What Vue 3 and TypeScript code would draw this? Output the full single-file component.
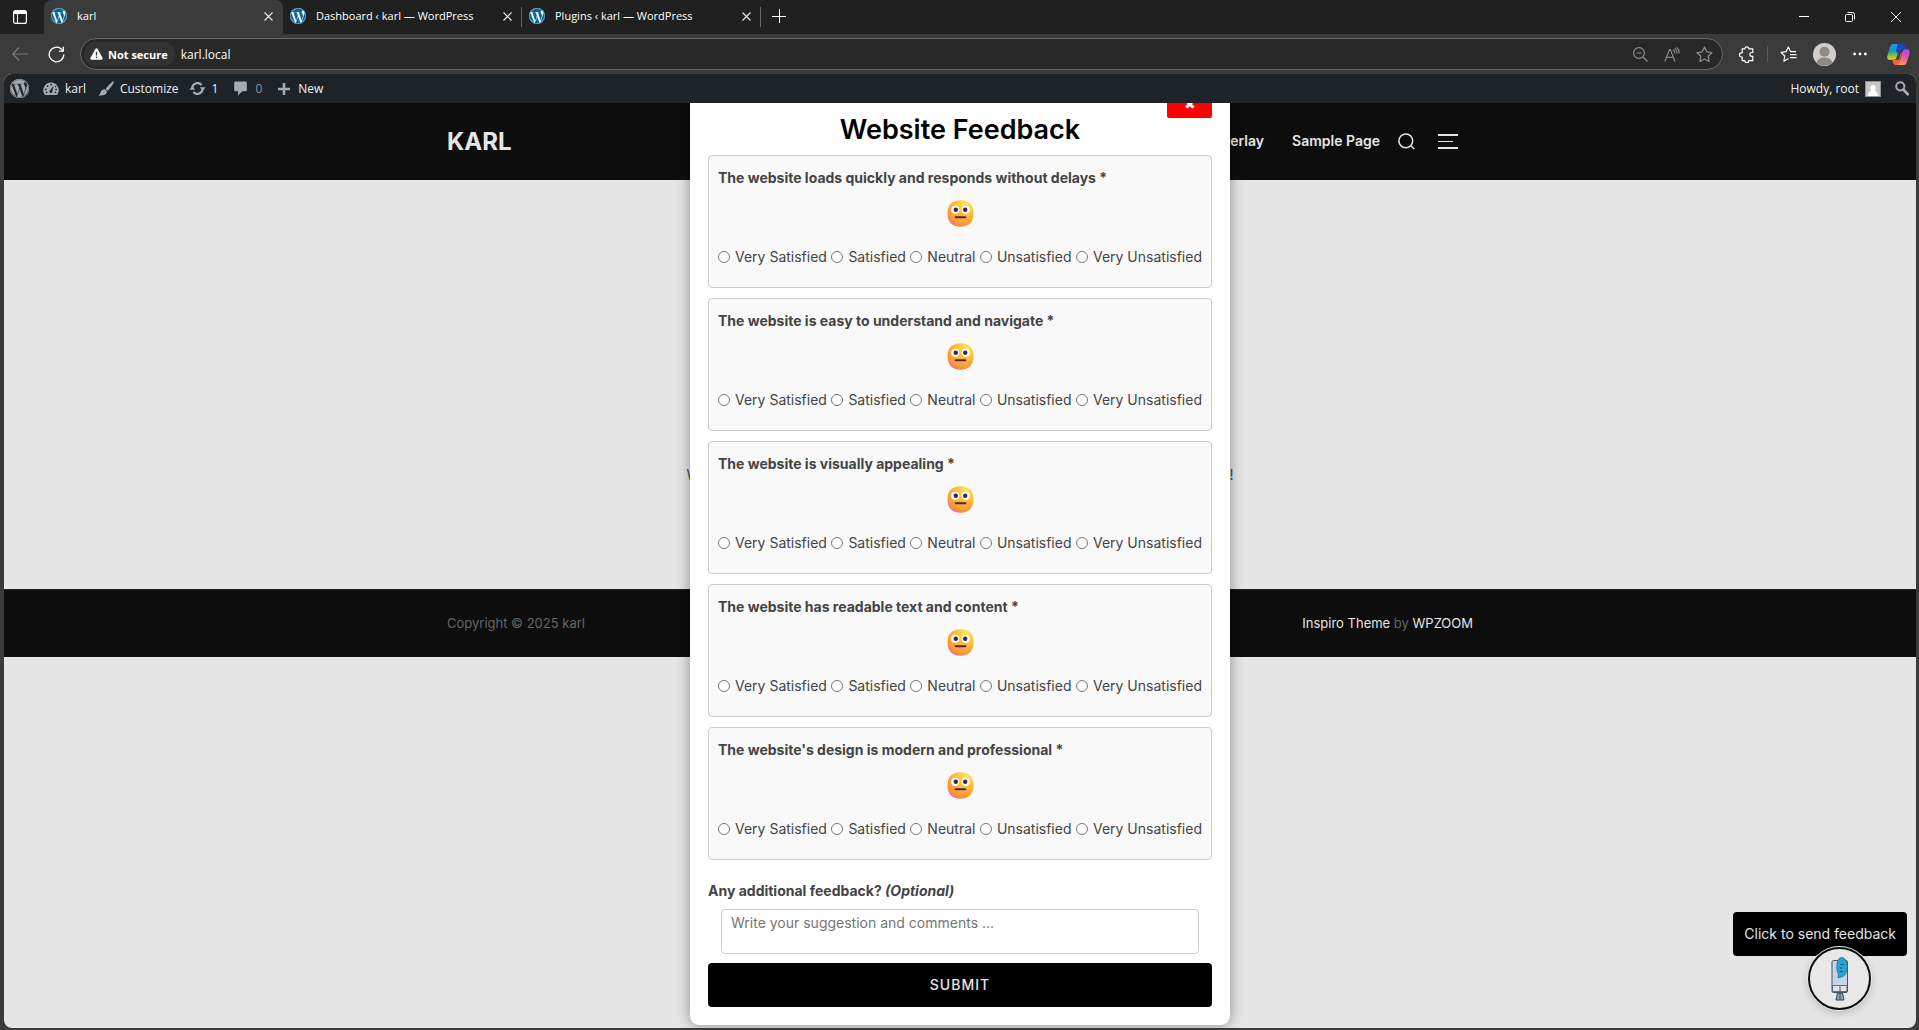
<script setup lang="ts">
import { reactive, ref } from 'vue'

interface Tab {
  title: string
  active: boolean
}

const WP_PATH =
  'M21.469 6.825c.84 1.537 1.318 3.3 1.318 5.175 0 3.979-2.156 7.456-5.363 9.325l3.295-9.527c.615-1.54.82-2.771.82-3.864 0-.405-.026-.78-.07-1.11m-7.981.105c.647-.03 1.232-.105 1.232-.105.582-.075.514-.93-.067-.899 0 0-1.755.135-2.88.135-1.064 0-2.85-.15-2.85-.15-.585-.03-.661.855-.075.885 0 0 .54.061 1.125.09l1.68 4.605-2.37 7.08L5.354 6.9c.649-.03 1.234-.1 1.234-.1.585-.075.516-.93-.065-.896 0 0-1.746.138-2.874.138-.2 0-.438-.008-.69-.015C4.911 3.15 8.235 1.215 12 1.215c2.809 0 5.365 1.072 7.286 2.833-.046-.003-.091-.009-.141-.009-1.06 0-1.812.923-1.812 1.914 0 .89.513 1.643 1.06 2.531.411.72.89 1.643.89 2.977 0 .915-.354 1.994-.821 3.479l-1.075 3.585-3.9-11.61.001.014zM12 22.784c-1.059 0-2.081-.153-3.048-.437l3.237-9.406 3.315 9.087c.024.053.05.101.078.149-1.12.393-2.325.609-3.582.609M1.211 12c0-1.564.336-3.05.935-4.39L7.29 21.709C3.694 19.96 1.212 16.271 1.211 12M12 0C5.385 0 0 5.385 0 12s5.385 12 12 12 12-5.385 12-12S18.615 0 12 0zM12 .55C18.3.55 23.45 5.7 23.45 12S18.3 23.45 12 23.45.55 18.3.55 12 5.7.55 12 .55z'

const tabs: Tab[] = [
  { title: 'karl', active: true },
  { title: 'Dashboard ‹ karl — WordPress', active: false },
  { title: 'Plugins ‹ karl — WordPress', active: false },
]

const questions: string[] = [
  'The website loads quickly and responds without delays *',
  'The website is easy to understand and navigate *',
  'The website is visually appealing *',
  'The website has readable text and content *',
  "The website's design is modern and professional *",
]

const ratings: string[] = ['Very Satisfied', 'Satisfied', 'Neutral', 'Unsatisfied', 'Very Unsatisfied']

const answers = reactive<Record<number, string>>({})
const comment = ref<string>('')
const address = ref<string>('karl.local')
</script>

<template>
  <div class="browser">
    <div class="tabstrip">
      <button class="chrome-btn workspace" aria-label="Tab actions">
        <svg width="14" height="14" viewBox="0 0 14 14" fill="none" stroke="#fff">
          <rect x=".6" y=".6" width="12.8" height="12.8" rx="2" stroke-width="1.2" />
          <path d="M1 2.5h12" stroke-width="3" />
          <path d="M4.5 4v9" stroke-width="1.1" />
        </svg>
      </button>
      <div v-for="tab in tabs" :key="tab.title" class="tab" :class="{ active: tab.active }">
        <svg class="favicon" width="16" height="16" viewBox="0 0 24 24">
          <circle cx="12" cy="12" r="12" fill="#fff" />
          <path :d="WP_PATH" fill="#006799" fill-rule="evenodd" stroke="#006799" stroke-width=".3" />
        </svg>
        <span class="tab-title">{{ tab.title }}</span>
        <button class="chrome-btn tab-close" aria-label="Close tab">
          <svg width="9" height="9" viewBox="0 0 9 9" stroke="#e6e6e6" stroke-width="1.2"><path d="M.5.5l8 8M8.5.5l-8 8" /></svg>
        </button>
      </div>
      <button class="chrome-btn new-tab" aria-label="New tab">
        <svg width="14" height="14" viewBox="0 0 14 14" stroke="#fff"><path d="M0 7.5h14M7.5 0v14" /></svg>
      </button>
      <div class="window-controls">
        <button class="chrome-btn" aria-label="Minimize">
          <svg width="10" height="10" viewBox="0 0 10 10" stroke="#fff"><path d="M0 4.5h10" /></svg>
        </button>
        <button class="chrome-btn" aria-label="Restore">
          <svg width="10" height="10" viewBox="0 0 10 10" fill="none" stroke="#fff">
            <rect x=".5" y="2.5" width="7" height="7" rx="1" />
            <path d="M2.5.5h5a2 2 0 0 1 2 2v5" />
          </svg>
        </button>
        <button class="chrome-btn" aria-label="Close">
          <svg width="10" height="10" viewBox="0 0 10 10" stroke="#fff"><path d="M0 0l10 10M10 0L0 10" /></svg>
        </button>
      </div>
    </div>

    <div class="toolbar">
      <button class="chrome-btn nav-btn" aria-label="Back">
        <svg width="16" height="14" viewBox="0 0 16 14" fill="none" stroke="#7a7a7a" stroke-width="1.2"><path d="M16 7H1M7 .5L.8 7 7 13.5" /></svg>
      </button>
      <button class="chrome-btn nav-btn" aria-label="Refresh">
        <svg width="17" height="17" viewBox="0 0 17 17" fill="none" stroke="#fff" stroke-width="1.3">
          <path d="M15.8 8.5a7.3 7.3 0 1 1-2.2-5.2l1.6 1.7" />
          <path d="M15.3.8v4.3H11" />
        </svg>
      </button>
      <div class="address">
        <button class="chrome-btn security">
          <svg width="13" height="12" viewBox="0 0 13 12">
            <path d="M6.5.3c.5 0 .9.3 1.1.7l5 9c.4.8-.1 1.7-1 1.7H1.4c-.9 0-1.4-.9-1-1.7l5-9c.2-.4.6-.7 1.1-.7z" fill="#fff" />
            <path d="M6.5 3.8v3.7M6.5 8.6v1.3" stroke="#333" stroke-width="1.3" />
          </svg>
          Not secure
        </button>
        <input v-model="address" class="url" type="text" aria-label="Address" />
        <button class="chrome-btn addr-btn" aria-label="Zoom">
          <svg width="15" height="15" viewBox="0 0 15 15" fill="none" stroke="#909090" stroke-width="1.1">
            <circle cx="6" cy="6" r="5.4" /><path d="M10 10l4.5 4.5M3.5 6h5" />
          </svg>
        </button>
        <button class="chrome-btn addr-btn" aria-label="Read aloud">
          <svg width="16" height="15" viewBox="0 0 16 15" fill="none" stroke="#909090" stroke-width="1.1">
            <path d="M.8 14.5L5.5 2.5h.8L11 14.5M2.600 10.200h6.600M8.800 2.800a4.200 4.200 0 0 1 2.200 4M10.800 1.400a6.500 6.500 0 0 1 2.400 5.200M12.600.3a7.500 7.500 0 0 1 2.600 5.900" />
          </svg>
        </button>
        <button class="chrome-btn addr-btn" aria-label="Favorite">
          <svg width="17" height="17" viewBox="0 0 17 17" fill="none" stroke="#909090" stroke-width="1.2" stroke-linejoin="round">
            <path d="M8.5 1l2.3 4.800 5.200.7-3.800 3.700.9 5.300-4.600-2.500-4.600 2.500.9-5.300L1 6.500l5.200-.7z" />
          </svg>
        </button>
      </div>
      <div class="toolbar-right">
        <button class="chrome-btn tool" aria-label="Extensions">
          <svg width="16" height="17" viewBox="0 0 16 17" fill="none" stroke="#fff" stroke-width="1.2" stroke-linejoin="round">
            <path d="M3.2 2.8h2.600a2 2 0 0 1 4 0h4v3.700h-1a1.900 1.900 0 0 0 0 3.800h1v4.400h-4a2 2 0 0 1-4 0H3.200v-3.700H2.500a1.900 1.900 0 0 1 0-4.200h.7z" />
          </svg>
        </button>
        <span class="tool-sep"></span>
        <button class="chrome-btn tool favs" aria-label="Favorites">
          <svg width="17" height="16" viewBox="0 0 17 16" fill="none" stroke="#fff" stroke-width="1.2" stroke-linejoin="round">
            <path d="M8.5 12.6l-4.600 2.600.9-5.200L1 6.400l5.200-.8L8.300 1l2.300 4.600H16M10 8.600h6.500M10 11.600h6.500" />
          </svg>
        </button>
        <button class="chrome-btn tool profile" aria-label="Profile">
          <svg width="23" height="23" viewBox="0 0 23 23">
            <circle cx="11.5" cy="11.5" r="11.5" fill="#d2cfcb" />
            <circle cx="11.5" cy="8.8" r="5" fill="#8d8984" />
            <path d="M3.5 19.5c1-3.4 4-5 8-5s7 1.6 8 5c-2 2.2-4.8 3.3-8 3.3s-6-1.1-8-3.3z" fill="#8d8984" />
          </svg>
        </button>
        <button class="chrome-btn tool menu" aria-label="Settings and more">
          <svg width="14" height="4" viewBox="0 0 14 4" fill="#fff"><circle cx="1.6" cy="2" r="1.4" /><circle cx="7" cy="2" r="1.4" /><circle cx="12.4" cy="2" r="1.4" /></svg>
        </button>
        <button class="chrome-btn tool copilot" aria-label="Copilot">
          <svg width="23" height="21" viewBox="0 0 23 21">
            <defs>
              <linearGradient id="cpA" x1="0" y1="0" x2="0" y2="1">
                <stop offset="0" stop-color="#1c9cf0" /><stop offset=".4" stop-color="#1f93c8" /><stop offset=".7" stop-color="#6fbf4a" /><stop offset="1" stop-color="#f7d000" />
              </linearGradient>
              <linearGradient id="cpB" x1=".7" y1="0" x2=".4" y2="1">
                <stop offset="0" stop-color="#a14df0" /><stop offset=".5" stop-color="#e9529c" /><stop offset="1" stop-color="#ff9a5a" />
              </linearGradient>
            </defs>
            <path d="M6 0h9L9.5 13.6c-.5 1.400-1.300 2.200-2.800 2.200H3c-2.300 0-3.300-1.700-2.600-4L3 3.500C3.700 1.200 4.300 0 6 0z" fill="url(#cpA)" />
            <path d="M10.5 0H15c1.500 0 2.300 1 2.700 2.300l.8 2.900h-3c-1.500 0-2.300.8-2.700 2.100l-1.300 4L9 7z" fill="#1b48c9" />
            <path d="M17 21H9.500C7.500 21 6.500 20.300 6 18.700L5.200 15.800H8c1.500 0 2.300-.8 2.800-2.200l.7-2.300 1.300-4 2 2L12.500 17z" fill="#f0643c" />
            <path d="M17 21H9.500c1.500 0 2.400-1 3-3l3-10c.4-1.500 1-2.800 2.500-2.800h2c2.300 0 3.300 1.700 2.600 4L20 17.500c-.7 2.300-1.300 3.500-3 3.500z" fill="url(#cpB)" />
            <path d="M12.6 7.5L10.500 14c-.4 1.200-1 1.800-2 1.800h3.200l2.500-8.300z" fill="#3b3b3b" />
          </svg>
        </button>
      </div>
    </div>

    <div class="viewport">
      <nav class="adminbar">
        <a href="#" aria-label="About WordPress" class="ab-logo">
          <svg width="19" height="19" viewBox="0 0 24 24"><path :d="WP_PATH" fill="#a7aaad" fill-rule="evenodd" stroke="#a7aaad" stroke-width=".4" /></svg>
        </a>
        <a href="#" class="ab-site">
          <svg width="16" height="14" viewBox="0 0 16 14">
            <path d="M8 .5a7.7 7.7 0 0 0-6.6 11.7c.3.5.8.8 1.4.8h10.400c.6 0 1.100-.3 1.400-.8A7.700 7.700 0 0 0 8 .5z" fill="#a7aaad" />
            <path d="M10.8 3.5L9.300 9.200a1.500 1.500 0 1 1-2.300-.8z" fill="#1d2327" />
            <g fill="#1d2327"><circle cx="8" cy="2.6" r=".9" /><circle cx="4.6" cy="4.1" r=".9" /><circle cx="2.9" cy="7.3" r=".9" /><circle cx="13.1" cy="7.3" r=".9" /><circle cx="12.6" cy="4.7" r=".7" /><circle cx="3.6" cy="10.3" r=".9" /><circle cx="12.4" cy="10.3" r=".9" /></g>
          </svg>
          karl
        </a>
        <a href="#" class="ab-customize">
          <svg width="16" height="15" viewBox="0 0 16 15" fill="#a7aaad">
            <path d="M15.6.3c.5.5.2 1.300-.3 2.200-1.300 2.300-3.300 5-5 6.700-.7.600-1.400.5-2-.1-.7-.6-.8-1.300-.2-2C9.700 5.200 12 2.500 14 .9c.6-.5 1.200-1 1.600-.6zM6.800 8.300l2 2c.2 1.800-1 3.300-3 3.700-2 .5-4 .8-5.600.5 1.500-.8 1.800-1.700 2.200-3 .5-1.900 2.200-3.500 4.400-3.200z" />
          </svg>
          Customize
        </a>
        <a href="#" class="ab-updates">
          <svg width="17" height="13" viewBox="0 0 17 13" fill="none" stroke="#a7aaad" stroke-width="2.2">
            <path d="M3.3 5.6A5.300 5.300 0 0 1 12.600 3M13.700 7.400A5.300 5.300 0 0 1 4.400 10" />
            <path d="M10.7 5.2h6L13.700 9zM6.300 7.800h-6L3.300 4z" fill="#a7aaad" stroke="none" />
          </svg>
          1
        </a>
        <a href="#" class="ab-comments">
          <svg width="13" height="15" viewBox="0 0 13 15" fill="#a7aaad"><path d="M1.5.5h10c.8 0 1.300.5 1.300 1.300V9c0 .8-.5 1.300-1.300 1.300H8.300L4 14.600v-4.300H1.500C.7 10.300.2 9.800.2 9V1.800C.2 1 .7.5 1.500.5z" /></svg>
          0
        </a>
        <a href="#" class="ab-new">
          <svg width="12" height="12" viewBox="0 0 12 12" stroke="#a7aaad" stroke-width="2.6"><path d="M0 6h12M6 0v12" /></svg>
          New
        </a>
        <a href="#" class="ab-user">
          Howdy, root
          <svg width="16" height="16" viewBox="0 0 16 16">
            <rect width="16" height="16" fill="#8c8f94" /><rect x="1" y="1" width="14" height="14" fill="#c5c6c8" />
            <path d="M8 4c1.7 0 2.8 1.2 2.8 2.900 0 1.300-.6 2.400-1.300 2.900 1.800.5 3.500 1.700 3.800 5.200H2.700c.3-3.500 2-4.700 3.800-5.200-.7-.5-1.300-1.600-1.300-2.900C5.200 5.200 6.300 4 8 4z" fill="#fff" />
          </svg>
        </a>
        <a href="#" class="ab-search" aria-label="Search">
          <svg width="14" height="15" viewBox="0 0 14 15" fill="none" stroke="#a7aaad"><circle cx="5.3" cy="5.3" r="4.1" stroke-width="2" /><path d="M8.5 8.8l4.300 4.500" stroke-width="2.8" stroke-linecap="round" /></svg>
        </a>
      </nav>

      <header class="site-header">
        <div class="container">
          <a href="#" class="brand">KARL</a>
          <nav class="site-nav">
            <a href="#">Overlay</a>
            <a href="#">Sample Page</a>
            <button class="icon-btn search-btn" aria-label="Search">
              <svg width="17" height="17" viewBox="0 0 17 17" fill="none" stroke="#e5e5e5" stroke-width="1.5"><circle cx="7.8" cy="7.8" r="6.9" /><path d="M12.8 12.8l3.5 3.2" /></svg>
            </button>
            <button class="icon-btn" aria-label="Open sidebar">
              <svg width="20" height="16" viewBox="0 0 20 16" fill="#e5e5e5"><path d="M0 0h20v2H0zM0 7h15v1H0zM0 13h20v2H0z" /></svg>
            </button>
          </nav>
        </div>
      </header>

      <main class="site-main">
        <p><span>W</span><span>!</span></p>
      </main>

      <footer class="site-footer">
        <div class="container">
          <span>Copyright © 2025 karl</span>
          <span><a href="#">Inspiro Theme</a> by <a href="#">WPZOOM</a></span>
        </div>
      </footer>

      <div class="launcher">
        <span class="tooltip">Click to send feedback</span>
        <button class="launch-btn" aria-label="Send feedback">
          <svg width="18" height="46" viewBox="0 0 18 46">
            <path d="M6.5 37h5l1.5 7H5z" fill="#8fa0ad" stroke="#3c454d" stroke-width="1" />
            <rect x="1" y="4.5" width="15.5" height="32" rx="1.5" fill="#c3d6e6" stroke="#4a545c" />
            <path d="M1.5 29.5h14.5v6H1.5z" fill="#dfe3e6" stroke="#4a545c" stroke-width=".8" />
            <path d="M9 30v14" stroke="#4a545c" />
            <path d="M10.5 1.5c3.5 0 5.8 4 5.8 9.500 0 5-2.200 9-5 9.500L7 22l.3-4C6.200 16.300 5.800 14 5.800 11c0-5.500 1.700-9.500 4.700-9.500z" fill="#27a3d3" stroke="#2c6f8c" stroke-width=".8" />
            <path d="M9 8.5h3.500M9 12h2M8.500 15.500h3.500" stroke="#17607f" stroke-width="1.2" />
          </svg>
        </button>
      </div>

      <div class="overlay">
        <form class="modal" @submit.prevent>
          <button type="button" class="modal-close" aria-label="Close">✖</button>
          <h2>Website Feedback</h2>
          <fieldset v-for="(q, i) in questions" :key="q" class="card">
            <legend class="question">{{ q }}</legend>
            <svg class="emoji" width="27" height="27" viewBox="0 0 27 27">
              <defs>
                <radialGradient :id="'face' + i" cx=".72" cy=".15" r="1">
                  <stop offset="0" stop-color="#ffe65c" /><stop offset=".45" stop-color="#ffb836" /><stop offset=".8" stop-color="#f8943c" /><stop offset="1" stop-color="#ee5fa0" />
                </radialGradient>
              </defs>
              <path d="M13.5.3c8.6 0 13 4.800 13 13.200s-4.400 13.200-13 13.200-13-4.800-13-13.200S4.900.3 13.500.3z" :fill="'url(#face' + i + ')'" />
              <circle cx="8.2" cy="9.8" r="4.1" fill="#fff" /><circle cx="18.8" cy="9.8" r="4.1" fill="#fff" />
              <circle cx="8.8" cy="9.8" r="2.2" fill="#3d2438" /><circle cx="18.2" cy="9.8" r="2.2" fill="#3d2438" />
              <rect x="7.6" y="16.2" width="11.8" height="2" rx="1" fill="#4b2a45" />
            </svg>
            <div class="options">
              <label v-for="r in ratings" :key="r">
                <input v-model="answers[i]" type="radio" :name="'q' + i" :value="r" />{{ r }}
              </label>
            </div>
          </fieldset>
          <label class="comment-label" for="comment">Any additional feedback? <em>(Optional)</em></label>
          <textarea id="comment" v-model="comment" placeholder="Write your suggestion and comments ..."></textarea>
          <button type="submit" class="submit">SUBMIT</button>
        </form>
      </div>
    </div>
  </div>
</template>

<style>
html,
body {
  margin: 0;
  background: #3b3b3b;
}
</style>

<style scoped>
.browser {
  display: flex;
  flex-direction: column;
  min-height: 100vh;
  background: #3b3b3b;
  color: #fff;
  font-family: 'Open Sans', 'Noto Sans', sans-serif;
  font-size: 12px;
}
button {
  font: inherit;
  color: inherit;
  padding: 0;
  border: 0;
  background: none;
}
a {
  color: inherit;
  text-decoration: none;
}
svg {
  display: block;
  flex: none;
}
.chrome-btn {
  display: flex;
  align-items: center;
  justify-content: center;
}

/* tab strip */
.tabstrip {
  display: flex;
  height: 34px;
  background: #202020;
}
.workspace {
  width: 44px;
  padding-right: 4px;
  box-sizing: border-box;
}
.tab {
  display: flex;
  align-items: center;
  box-sizing: border-box;
  width: 239px;
  padding: 0 10px 2px 7px;
  position: relative;
}
.tab.active {
  background: #3b3b3b;
  border-radius: 8px 8px 0 0;
}
.tab:not(.active)::after {
  content: '';
  position: absolute;
  right: 0;
  top: 7px;
  width: 1px;
  height: 20px;
  background: #666;
}
.tab-title {
  flex: 1;
  margin-left: 10px;
  padding-bottom: 2px;
  font-size: 11px;
  white-space: nowrap;
}
.new-tab {
  width: 36px;
  padding-bottom: 2px;
}
.window-controls {
  display: flex;
  margin-left: auto;
}
.window-controls button {
  width: 46px;
}

/* toolbar */
.toolbar {
  display: flex;
  align-items: center;
  height: 40px;
  padding-left: 2px;
}
.nav-btn {
  width: 36px;
  height: 32px;
}
.address {
  flex: 1;
  display: flex;
  align-items: center;
  box-sizing: border-box;
  height: 32px;
  margin-left: 6px;
  padding: 0 2px 0 3px;
  border: 1px solid #686868;
  border-radius: 16px;
  background: #282828;
}
.security {
  gap: 5px;
  height: 24px;
  padding: 0 7px 0 6px;
  border-radius: 12px;
  background: #333;
  font-size: 11px;
  font-weight: 700;
}
.url {
  flex: 1;
  min-width: 0;
  margin-left: 6px;
  padding: 0;
  border: 0;
  outline: 0;
  background: none;
  color: #fff;
  font: inherit;
}
.addr-btn {
  width: 32px;
  height: 30px;
}
.toolbar-right {
  display: flex;
  align-items: center;
  padding-right: 3px;
}
.tool {
  width: 36px;
  height: 32px;
}
.toolbar-right .tool:first-child {
  margin-left: 6px;
}
.tool-sep {
  width: 1px;
  height: 16px;
  margin-left: 2px;
  background: #5c5c5c;
}
.favs,
.copilot {
  margin-left: 2px;
}

/* page */
.viewport {
  position: relative;
  flex: 1;
  margin: 0 3px 2px 4px;
  border-radius: 8px;
  overflow: hidden;
  background: #e5e5e5;
  font-family: Inter, 'Liberation Sans', sans-serif;
}
.adminbar {
  position: relative;
  z-index: 3;
  display: flex;
  align-items: center;
  height: 29px;
  padding: 0 7px 0 6px;
  background: #1d2327;
  color: #f0f0f1;
  font-family: 'Open Sans', 'Noto Sans', sans-serif;
}
.adminbar a {
  display: flex;
  align-items: center;
  gap: 6px;
  margin-right: 14px;
}
.adminbar .ab-site {
  margin-right: 12px;
}
.adminbar .ab-customize {
  margin-right: 10px;
}
.adminbar .ab-updates {
  margin-right: 16px;
}
.adminbar .ab-comments {
  color: #8f9296;
  gap: 8px;
  margin-right: 16px;
}
.adminbar .ab-new {
  gap: 8px;
}
.adminbar .ab-user {
  margin-left: auto;
}
.adminbar .ab-search {
  margin-right: 0;
}
.site-header,
.site-footer {
  background: #0d0d0d;
}
.container {
  display: flex;
  align-items: center;
  justify-content: space-between;
  box-sizing: border-box;
  max-width: 1026px;
  margin: 0 auto;
}
.site-header .container {
  height: 77px;
}
.brand {
  color: #e5e5e5;
  font-size: 24px;
  font-weight: 700;
}
.site-nav {
  display: flex;
  align-items: center;
  padding-right: 15px;
  color: #e5e5e5;
  font-size: 14px;
  font-weight: 600;
}
.site-nav a {
  margin-right: 28px;
  padding-bottom: 2px;
}
.site-nav a + a {
  margin-right: 18px;
}
.search-btn {
  margin-right: 23px;
}
.site-main {
  padding: 282px 0 101px;
}
.site-main p {
  display: flex;
  justify-content: space-between;
  max-width: 547px;
  margin: 0 auto;
  color: #444;
  font-size: 14px;
  line-height: 26px;
}
.site-footer .container {
  height: 67px;
  padding-bottom: 2px;
  color: #666;
  font-size: 13px;
}
.site-footer {
  border-top: 1px solid #222;
}
.site-footer a {
  color: #e5e5e5;
}

/* floating launcher */
.launcher {
  position: absolute;
  right: 9px;
  bottom: 18px;
  z-index: 1;
  display: flex;
  flex-direction: column;
  align-items: flex-end;
}
.tooltip {
  padding: 0 11px;
  border-radius: 4px;
  background: #000;
  color: #e5e5e5;
  font-size: 14px;
  line-height: 44px;
}
.launch-btn {
  display: flex;
  align-items: center;
  justify-content: center;
  box-sizing: border-box;
  width: 63px;
  height: 63px;
  margin: -9px 36px 0 0;
  border: 2px solid #0d0d0d;
  border-radius: 50%;
  background: #e8e8e8;
  box-shadow: 0 0 0 1px #e8e8e8, 0 3px 8px rgba(0, 0, 0, 0.2);
}

/* feedback dialog */
.overlay {
  position: absolute;
  inset: 0;
  z-index: 2;
  display: flex;
  align-items: center;
  justify-content: center;
  pointer-events: none;
}
.modal {
  position: relative;
  display: flex;
  flex-direction: column;
  box-sizing: border-box;
  width: 540px;
  max-width: 100%;
  padding: 36px 18px 18px;
  border-radius: 9px;
  background: #fff;
  box-shadow: 0 0 14px rgba(0, 0, 0, 0.4);
  color: #444;
  font-size: 14px;
  line-height: 26px;
  pointer-events: auto;
}
.modal-close {
  position: absolute;
  top: 13px;
  right: 18px;
  width: 45px;
  height: 28px;
  border-radius: 2px;
  background: #f00;
  color: #fff;
  font-size: 14px;
  line-height: 28px;
}
.modal h2 {
  margin: 0 0 8px;
  color: #000;
  font-size: 27px;
  font-weight: 600;
  line-height: 34px;
  text-align: center;
}
.card {
  min-width: 0;
  margin: 0 0 10px;
  padding: 9px 9px 17px;
  border: 1px solid #ccc;
  border-radius: 4px;
  background: #f9f9f9;
}
.question {
  float: left;
  width: 100%;
  padding: 0;
  font-weight: 700;
}
.emoji {
  clear: both;
  margin: 0 auto;
  padding-top: 9px;
}
.options {
  display: flex;
  justify-content: space-between;
  margin-top: 17px;
  white-space: nowrap;
}
.options label {
  display: flex;
  align-items: center;
}
.options input {
  width: 12px;
  height: 12px;
  margin: 0 5px 0 0;
}
.comment-label {
  margin: 8px 0 5px;
  font-weight: 700;
}
textarea {
  box-sizing: border-box;
  height: 45px;
  margin: 0 13px;
  padding: 0 9px;
  border: 1px solid #ccc;
  border-radius: 4px;
  outline: 0;
  resize: none;
  background: #fff;
  color: #444;
  font: inherit;
}
textarea::placeholder {
  color: #757575;
}
.submit {
  height: 44px;
  margin-top: 9px;
  border-radius: 4px;
  background: #000;
  color: #e5e5e5;
  font-size: 14px;
  font-weight: 500;
  letter-spacing: 1px;
}
</style>
